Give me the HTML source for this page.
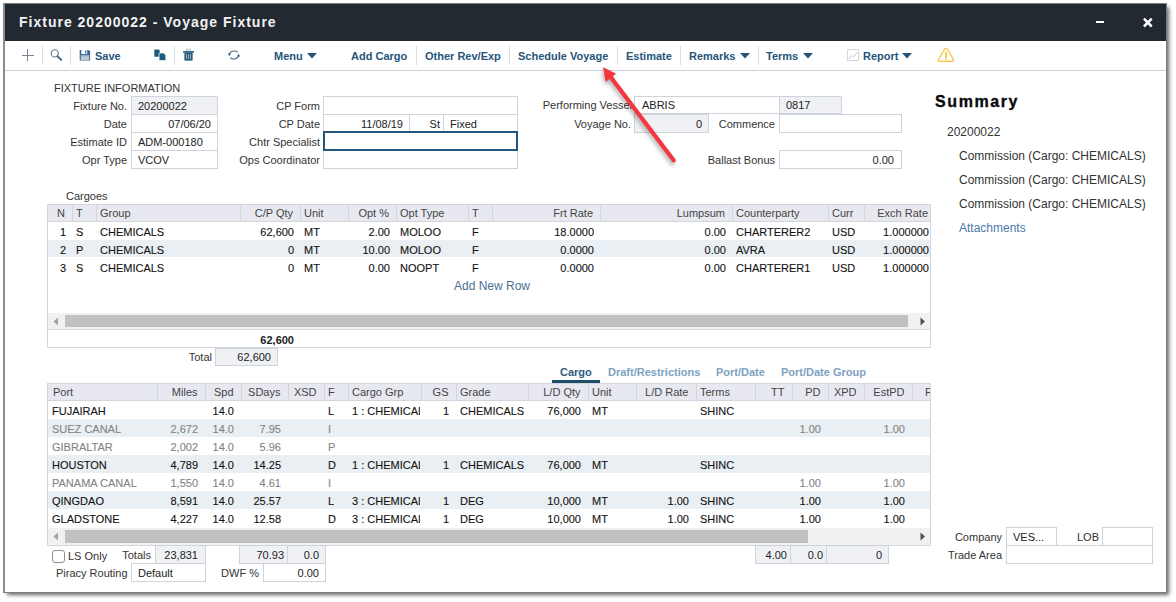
<!DOCTYPE html>
<html><head><meta charset="utf-8"><style>
*{box-sizing:border-box;margin:0;padding:0}
html,body{width:1176px;height:602px;overflow:hidden;background:#fff}
body{position:relative;font-family:"Liberation Sans",sans-serif;font-size:11px;color:#333}
.a{position:absolute;white-space:nowrap;line-height:20px}
svg.a{line-height:0}
.a[style*="#111"],.a[style*="#838383"]{-webkit-text-stroke:0.1px currentColor}
</style></head><body>
<div class="a" style="left:3px;top:3px;width:1164px;height:590px;background:#fff;border:1px solid #7d7d7d;border-left:2px solid #8c8c8c;box-shadow:3px 3px 4px -1px rgba(0,0,0,.6)"></div>
<div class="a" style="left:5px;top:4px;width:1161px;height:37px;background:#222930"></div>
<div class="a" style="left:19px;top:12px;font-size:14px;font-weight:bold;letter-spacing:1px;color:#f2f2f2">Fixture 20200022 - Voyage Fixture</div>
<div class="a" style="left:1096px;top:21px;width:8px;height:2px;background:#fff"></div>
<svg class="a" style="left:1141px;top:16px" width="13" height="13" viewBox="0 0 13 13"><path d="M2.9 2.7L10.7 10.5M10.7 2.7L2.9 10.5" stroke="#fff" stroke-width="2.5"/></svg>
<div class="a" style="left:5px;top:70px;width:1161px;height:1px;background:#c9d3dc"></div>
<div class="a" style="left:42px;top:46px;width:1px;height:19px;background:#d6dce3"></div>
<div class="a" style="left:70px;top:46px;width:1px;height:19px;background:#d6dce3"></div>
<div class="a" style="left:174px;top:46px;width:1px;height:19px;background:#d6dce3"></div>
<div class="a" style="left:416px;top:46px;width:1px;height:19px;background:#d6dce3"></div>
<div class="a" style="left:509px;top:46px;width:1px;height:19px;background:#d6dce3"></div>
<div class="a" style="left:617px;top:46px;width:1px;height:19px;background:#d6dce3"></div>
<div class="a" style="left:680px;top:46px;width:1px;height:19px;background:#d6dce3"></div>
<div class="a" style="left:758px;top:46px;width:1px;height:19px;background:#d6dce3"></div>
<div class="a" style="left:22px;top:55px;width:12px;height:1px;background:#7b8794"></div>
<div class="a" style="left:27px;top:49px;width:1px;height:12px;background:#7b8794"></div>
<svg class="a" style="left:48px;top:47px" width="16" height="16" viewBox="0 0 16 16"><circle cx="6.8" cy="6.4" r="3.6" fill="none" stroke="#5f768b" stroke-width="1.1"/><path d="M9.4 9.1L13.2 12.9" stroke="#3d6383" stroke-width="1.9" stroke-linecap="round"/></svg>
<svg class="a" style="left:79px;top:49px" width="12" height="12" viewBox="0 0 12 12"><path d="M0.7 0.9H9.6L11.1 2.5V11.6H0.7Z" fill="#2c6594"/><rect x="2.3" y="0.9" width="5.9" height="4.2" fill="#fff"/><rect x="6" y="1.5" width="1.2" height="3" fill="#2c6594"/><rect x="1.8" y="6.1" width="8.4" height="5" fill="#c3c7d2"/><rect x="1.8" y="6.1" width="8.4" height="1.2" fill="#9aa6b6"/></svg>
<div class="a" style="left:95px;top:46px;font-size:11px;font-weight:bold;color:#27557a">Save</div>
<svg class="a" style="left:154px;top:49px" width="13" height="12" viewBox="0 0 13 12"><path d="M0.3 0.4H4.6L5.8 1.6V7.8H0.3Z" fill="#1f5a7c"/><path d="M5.1 4H9.6L11.8 6.2V11.6H5.1Z" fill="#1f5a7c" stroke="#fff" stroke-width="0.7"/></svg>
<svg class="a" style="left:183px;top:48px" width="12" height="13" viewBox="0 0 12 13"><rect x="3.6" y="1.2" width="3.8" height="2" fill="none" stroke="#b3c0ca" stroke-width="0.9"/><rect x="0" y="3.1" width="11" height="1.5" fill="#2a5d7e"/><rect x="1.4" y="4.4" width="8.2" height="8.2" fill="#245a7c"/><path d="M3.5 6V11M5.5 6V11M7.5 6V11" stroke="#a7b6c1" stroke-width="0.9"/></svg>
<svg class="a" style="left:227px;top:49px" width="14" height="12" viewBox="0 0 14 12"><path d="M2.4 5.6A4.8 3.8 0 0 1 10.6 3.2" fill="none" stroke="#4f6b84" stroke-width="1.1"/><path d="M11.6 6.4A4.8 3.8 0 0 1 3.4 8.8" fill="none" stroke="#4f6b84" stroke-width="1.1"/><path d="M0.8 4.6L4 4.6L2.4 7.2Z" fill="#3f6283"/><path d="M10 7.4L13.2 7.4L11.6 4.8Z" fill="#3f6283"/></svg>
<div class="a" style="left:274px;top:46px;font-size:11px;font-weight:bold;color:#27557a">Menu</div>
<svg class="a" style="left:307px;top:53px" width="10" height="6" viewBox="0 0 10 6"><path d="M0 0H10L5 5.5Z" fill="#27557a"/></svg>
<div class="a" style="left:351px;top:46px;font-size:11px;font-weight:bold;color:#27557a">Add Cargo</div>
<div class="a" style="left:425px;top:46px;font-size:11px;font-weight:bold;color:#27557a">Other Rev/Exp</div>
<div class="a" style="left:518px;top:46px;font-size:11px;font-weight:bold;color:#27557a">Schedule Voyage</div>
<div class="a" style="left:626px;top:46px;font-size:11px;font-weight:bold;color:#27557a">Estimate</div>
<div class="a" style="left:689px;top:46px;font-size:11px;font-weight:bold;color:#27557a">Remarks</div>
<svg class="a" style="left:740px;top:53px" width="10" height="6" viewBox="0 0 10 6"><path d="M0 0H10L5 5.5Z" fill="#27557a"/></svg>
<div class="a" style="left:766px;top:46px;font-size:11px;font-weight:bold;color:#27557a">Terms</div>
<svg class="a" style="left:803px;top:53px" width="10" height="6" viewBox="0 0 10 6"><path d="M0 0H10L5 5.5Z" fill="#27557a"/></svg>
<svg class="a" style="left:847px;top:49px" width="12" height="12" viewBox="0 0 12 12"><rect x="0.5" y="0.5" width="11" height="11" fill="none" stroke="#d3d8de"/><path d="M1.5 10L4.5 6.5L6.5 8L10.5 3" fill="none" stroke="#c5ccd4" stroke-width="1"/></svg>
<div class="a" style="left:863px;top:46px;font-size:11px;font-weight:bold;color:#27557a">Report</div>
<svg class="a" style="left:902px;top:53px" width="10" height="6" viewBox="0 0 10 6"><path d="M0 0H10L5 5.5Z" fill="#27557a"/></svg>
<svg class="a" style="left:936px;top:46px" width="20" height="18" viewBox="0 0 20 18"><path d="M8.4 3.3Q10 1.3 11.6 3.3L17.3 13.2Q18.3 15.4 15.9 15.4H4.1Q1.7 15.4 2.7 13.2Z" fill="none" stroke="#f8c040" stroke-width="1.3" stroke-linejoin="round"/><rect x="9.2" y="5.6" width="1.7" height="6.4" rx="0.5" fill="#f7c22e"/><rect x="9.2" y="12.6" width="1.7" height="1.5" fill="#f7c22e"/></svg>
<div class="a" style="left:54px;top:78px;font-size:11px;color:#333">FIXTURE INFORMATION</div>
<div class="a" style="left:131px;top:96px;width:87px;height:19px;background:#eff1f4;border:1px solid #cdd4dc"></div>
<div class="a" style="right:1049px;top:96px;font-size:11px;text-align:right;color:#333">Fixture No.</div>
<div class="a" style="left:138px;top:96px;font-size:11px;color:#222">20200022</div>
<div class="a" style="left:131px;top:114px;width:87px;height:19px;background:#fff;border:1px solid #cdd4dc"></div>
<div class="a" style="right:1049px;top:114px;font-size:11px;text-align:right;color:#333">Date</div>
<div class="a" style="right:965px;top:114px;font-size:11px;text-align:right;color:#222">07/06/20</div>
<div class="a" style="left:131px;top:132px;width:87px;height:19px;background:#fff;border:1px solid #cdd4dc"></div>
<div class="a" style="right:1049px;top:132px;font-size:11px;text-align:right;color:#333">Estimate ID</div>
<div class="a" style="left:138px;top:132px;font-size:11px;color:#222">ADM-000180</div>
<div class="a" style="left:131px;top:150px;width:87px;height:19px;background:#fff;border:1px solid #cdd4dc"></div>
<div class="a" style="right:1049px;top:150px;font-size:11px;text-align:right;color:#333">Opr Type</div>
<div class="a" style="left:138px;top:150px;font-size:11px;color:#222">VCOV</div>
<div class="a" style="right:856px;top:96px;font-size:11px;text-align:right;color:#333">CP Form</div>
<div class="a" style="right:856px;top:114px;font-size:11px;text-align:right;color:#333">CP Date</div>
<div class="a" style="right:856px;top:132px;font-size:11px;text-align:right;color:#333">Chtr Specialist</div>
<div class="a" style="right:856px;top:150px;font-size:11px;text-align:right;color:#333">Ops Coordinator</div>
<div class="a" style="left:323px;top:96px;width:195px;height:19px;background:#fff;border:1px solid #cdd4dc"></div>
<div class="a" style="left:323px;top:114px;width:87px;height:18px;background:#fff;border:1px solid #cdd4dc"></div>
<div class="a" style="left:409px;top:114px;width:35px;height:18px;background:#fff;border:1px solid #cdd4dc"></div>
<div class="a" style="left:443px;top:114px;width:75px;height:18px;background:#fff;border:1px solid #cdd4dc"></div>
<div class="a" style="left:323px;top:150px;width:195px;height:19px;background:#fff;border:1px solid #cdd4dc"></div>
<div class="a" style="left:323px;top:131px;width:195px;height:20px;background:#fff;border:2px solid #20577a"></div>
<div class="a" style="right:773px;top:114px;font-size:11px;text-align:right;color:#222">11/08/19</div>
<div class="a" style="right:736px;top:114px;font-size:11px;text-align:right;color:#222">St</div>
<div class="a" style="left:450px;top:114px;font-size:11px;color:#222">Fixed</div>
<div class="a" style="right:544px;top:95px;font-size:11px;text-align:right;color:#333">Performing Vessel</div>
<div class="a" style="left:634px;top:96px;width:146px;height:18px;background:#fff;border:1px solid #cdd4dc"></div>
<div class="a" style="left:779px;top:96px;width:63px;height:18px;background:#eff1f4;border:1px solid #cdd4dc"></div>
<div class="a" style="left:642px;top:95px;font-size:11px;color:#222">ABRIS</div>
<div class="a" style="left:786px;top:95px;font-size:11px;color:#222">0817</div>
<div class="a" style="right:545px;top:114px;font-size:11px;text-align:right;color:#333">Voyage No.</div>
<div class="a" style="left:634px;top:114px;width:75px;height:19px;background:#eff1f4;border:1px solid #cdd4dc"></div>
<div class="a" style="right:474px;top:114px;font-size:11px;text-align:right;color:#222">0</div>
<div class="a" style="right:401px;top:114px;font-size:11px;text-align:right;color:#333">Commence</div>
<div class="a" style="left:779px;top:114px;width:123px;height:19px;background:#fff;border:1px solid #cdd4dc"></div>
<div class="a" style="right:401px;top:150px;font-size:11px;text-align:right;color:#333">Ballast Bonus</div>
<div class="a" style="left:779px;top:150px;width:123px;height:19px;background:#fff;border:1px solid #cdd4dc"></div>
<div class="a" style="right:282px;top:150px;font-size:11px;text-align:right;color:#222">0.00</div>
<div class="a" style="left:935px;top:92px;font-size:16px;font-weight:bold;color:#0a0a0a;letter-spacing:1.6px;-webkit-text-stroke:0.35px #0a0a0a">Summary</div>
<div class="a" style="left:947px;top:122px;font-size:12px;color:#333">20200022</div>
<div class="a" style="left:959px;top:146px;font-size:12px;color:#333">Commission (Cargo: CHEMICALS)</div>
<div class="a" style="left:959px;top:170px;font-size:12px;color:#333">Commission (Cargo: CHEMICALS)</div>
<div class="a" style="left:959px;top:194px;font-size:12px;color:#333">Commission (Cargo: CHEMICALS)</div>
<div class="a" style="left:959px;top:218px;font-size:12px;color:#4b7aa8">Attachments</div>
<div class="a" style="left:66px;top:186px;font-size:11px;color:#333">Cargoes</div>
<div class="a" style="left:47px;top:204px;width:884px;height:144px;border:1px solid #d2d7df;background:#fff"></div>
<div class="a" style="left:48px;top:205px;width:882px;height:17px;background:#e8e9f0;border-bottom:1px solid #d2d7df"></div>
<div class="a" style="left:72px;top:205px;width:1px;height:17px;background:#d2d7df"></div>
<div class="a" style="left:96px;top:205px;width:1px;height:17px;background:#d2d7df"></div>
<div class="a" style="left:240px;top:205px;width:1px;height:17px;background:#d2d7df"></div>
<div class="a" style="left:300px;top:205px;width:1px;height:17px;background:#d2d7df"></div>
<div class="a" style="left:348px;top:205px;width:1px;height:17px;background:#d2d7df"></div>
<div class="a" style="left:396px;top:205px;width:1px;height:17px;background:#d2d7df"></div>
<div class="a" style="left:468px;top:205px;width:1px;height:17px;background:#d2d7df"></div>
<div class="a" style="left:492px;top:205px;width:1px;height:17px;background:#d2d7df"></div>
<div class="a" style="left:600px;top:205px;width:1px;height:17px;background:#d2d7df"></div>
<div class="a" style="left:732px;top:205px;width:1px;height:17px;background:#d2d7df"></div>
<div class="a" style="left:828px;top:205px;width:1px;height:17px;background:#d2d7df"></div>
<div class="a" style="left:864px;top:205px;width:1px;height:17px;background:#d2d7df"></div>
<div class="a" style="right:1111px;top:203px;font-size:11px;text-align:right;color:#444">N</div>
<div class="a" style="left:76px;top:203px;font-size:11px;color:#444">T</div>
<div class="a" style="left:100px;top:203px;font-size:11px;color:#444">Group</div>
<div class="a" style="right:883px;top:203px;font-size:11px;text-align:right;color:#444">C/P Qty</div>
<div class="a" style="left:304px;top:203px;font-size:11px;color:#444">Unit</div>
<div class="a" style="right:787px;top:203px;font-size:11px;text-align:right;color:#444">Opt %</div>
<div class="a" style="left:400px;top:203px;font-size:11px;color:#444">Opt Type</div>
<div class="a" style="left:472px;top:203px;font-size:11px;color:#444">T</div>
<div class="a" style="right:583px;top:203px;font-size:11px;text-align:right;color:#444">Frt Rate</div>
<div class="a" style="right:451px;top:203px;font-size:11px;text-align:right;color:#444">Lumpsum</div>
<div class="a" style="left:736px;top:203px;font-size:11px;color:#444">Counterparty</div>
<div class="a" style="left:832px;top:203px;font-size:11px;color:#444">Curr</div>
<div class="a" style="right:248px;top:203px;font-size:11px;text-align:right;color:#444">Exch Rate</div>
<div class="a" style="right:1110px;top:222px;font-size:11px;text-align:right;color:#111">1</div>
<div class="a" style="left:76px;top:222px;font-size:11px;color:#111">S</div>
<div class="a" style="left:100px;top:222px;font-size:11px;color:#111">CHEMICALS</div>
<div class="a" style="right:882px;top:222px;font-size:11px;text-align:right;color:#111">62,600</div>
<div class="a" style="left:304px;top:222px;font-size:11px;color:#111">MT</div>
<div class="a" style="right:786px;top:222px;font-size:11px;text-align:right;color:#111">2.00</div>
<div class="a" style="left:400px;top:222px;font-size:11px;color:#111">MOLOO</div>
<div class="a" style="left:472px;top:222px;font-size:11px;color:#111">F</div>
<div class="a" style="right:582px;top:222px;font-size:11px;text-align:right;color:#111">18.0000</div>
<div class="a" style="right:450px;top:222px;font-size:11px;text-align:right;color:#111">0.00</div>
<div class="a" style="left:736px;top:222px;font-size:11px;color:#111">CHARTERER2</div>
<div class="a" style="left:832px;top:222px;font-size:11px;color:#111">USD</div>
<div class="a" style="right:247px;top:222px;font-size:11px;text-align:right;color:#111">1.000000</div>
<div class="a" style="left:48px;top:240px;width:882px;height:17px;background:#e9eff2"></div>
<div class="a" style="right:1110px;top:240px;font-size:11px;text-align:right;color:#111">2</div>
<div class="a" style="left:76px;top:240px;font-size:11px;color:#111">P</div>
<div class="a" style="left:100px;top:240px;font-size:11px;color:#111">CHEMICALS</div>
<div class="a" style="right:882px;top:240px;font-size:11px;text-align:right;color:#111">0</div>
<div class="a" style="left:304px;top:240px;font-size:11px;color:#111">MT</div>
<div class="a" style="right:786px;top:240px;font-size:11px;text-align:right;color:#111">10.00</div>
<div class="a" style="left:400px;top:240px;font-size:11px;color:#111">MOLOO</div>
<div class="a" style="left:472px;top:240px;font-size:11px;color:#111">F</div>
<div class="a" style="right:582px;top:240px;font-size:11px;text-align:right;color:#111">0.0000</div>
<div class="a" style="right:450px;top:240px;font-size:11px;text-align:right;color:#111">0.00</div>
<div class="a" style="left:736px;top:240px;font-size:11px;color:#111">AVRA</div>
<div class="a" style="left:832px;top:240px;font-size:11px;color:#111">USD</div>
<div class="a" style="right:247px;top:240px;font-size:11px;text-align:right;color:#111">1.000000</div>
<div class="a" style="right:1110px;top:258px;font-size:11px;text-align:right;color:#111">3</div>
<div class="a" style="left:76px;top:258px;font-size:11px;color:#111">S</div>
<div class="a" style="left:100px;top:258px;font-size:11px;color:#111">CHEMICALS</div>
<div class="a" style="right:882px;top:258px;font-size:11px;text-align:right;color:#111">0</div>
<div class="a" style="left:304px;top:258px;font-size:11px;color:#111">MT</div>
<div class="a" style="right:786px;top:258px;font-size:11px;text-align:right;color:#111">0.00</div>
<div class="a" style="left:400px;top:258px;font-size:11px;color:#111">NOOPT</div>
<div class="a" style="left:472px;top:258px;font-size:11px;color:#111">F</div>
<div class="a" style="right:582px;top:258px;font-size:11px;text-align:right;color:#111">0.0000</div>
<div class="a" style="right:450px;top:258px;font-size:11px;text-align:right;color:#111">0.00</div>
<div class="a" style="left:736px;top:258px;font-size:11px;color:#111">CHARTERER1</div>
<div class="a" style="left:832px;top:258px;font-size:11px;color:#111">USD</div>
<div class="a" style="right:247px;top:258px;font-size:11px;text-align:right;color:#111">1.000000</div>
<div class="a" style="left:454px;top:276px;font-size:12px;color:#4b7092">Add New Row</div>
<div class="a" style="left:48px;top:313px;width:882px;height:16px;background:#f1f1f1"></div>
<div class="a" style="left:65px;top:315px;width:843px;height:12px;background:#c1c1c1"></div>
<svg class="a" style="left:53px;top:317px" width="6" height="9" viewBox="0 0 6 9"><path d="M5 0.5V8.5L0.5 4.5Z" fill="#a3a3a3"/></svg>
<svg class="a" style="left:920px;top:317px" width="6" height="9" viewBox="0 0 6 9"><path d="M0.5 0.5V8.5L5 4.5Z" fill="#505050"/></svg>
<div class="a" style="left:48px;top:329px;width:882px;height:1px;background:#d2d7df"></div>
<div class="a" style="right:882px;top:330px;font-size:11px;text-align:right;font-weight:bold;color:#222">62,600</div>
<div class="a" style="right:964px;top:347px;font-size:11px;text-align:right;color:#333">Total</div>
<div class="a" style="left:215px;top:348px;width:63px;height:18px;background:#eff1f4;border:1px solid #cdd4dc"></div>
<div class="a" style="right:905px;top:347px;font-size:11px;text-align:right;color:#222">62,600</div>
<div class="a" style="left:560px;top:362px;font-size:11px;font-weight:bold;color:#2f5d80">Cargo</div>
<div class="a" style="left:608px;top:362px;font-size:11px;font-weight:bold;color:#7ea2c0">Draft/Restrictions</div>
<div class="a" style="left:716px;top:362px;font-size:11px;font-weight:bold;color:#7ea2c0">Port/Date</div>
<div class="a" style="left:781px;top:362px;font-size:11px;font-weight:bold;color:#7ea2c0">Port/Date Group</div>
<div class="a" style="left:552px;top:380px;width:48px;height:3px;background:#1f4e6a"></div>
<div class="a" style="left:47px;top:383px;width:884px;height:163px;border:1px solid #d2d7df;background:#fff"></div>
<div class="a" style="left:48px;top:384px;width:882px;height:17px;background:#e8e9f0;border-bottom:1px solid #d2d7df"></div>
<div class="a" style="left:157px;top:384px;width:1px;height:17px;background:#d2d7df"></div>
<div class="a" style="left:205px;top:384px;width:1px;height:17px;background:#d2d7df"></div>
<div class="a" style="left:241px;top:384px;width:1px;height:17px;background:#d2d7df"></div>
<div class="a" style="left:288px;top:384px;width:1px;height:17px;background:#d2d7df"></div>
<div class="a" style="left:324px;top:384px;width:1px;height:17px;background:#d2d7df"></div>
<div class="a" style="left:348px;top:384px;width:1px;height:17px;background:#d2d7df"></div>
<div class="a" style="left:421px;top:384px;width:1px;height:17px;background:#d2d7df"></div>
<div class="a" style="left:456px;top:384px;width:1px;height:17px;background:#d2d7df"></div>
<div class="a" style="left:528px;top:384px;width:1px;height:17px;background:#d2d7df"></div>
<div class="a" style="left:588px;top:384px;width:1px;height:17px;background:#d2d7df"></div>
<div class="a" style="left:636px;top:384px;width:1px;height:17px;background:#d2d7df"></div>
<div class="a" style="left:696px;top:384px;width:1px;height:17px;background:#d2d7df"></div>
<div class="a" style="left:755px;top:384px;width:1px;height:17px;background:#d2d7df"></div>
<div class="a" style="left:792px;top:384px;width:1px;height:17px;background:#d2d7df"></div>
<div class="a" style="left:828px;top:384px;width:1px;height:17px;background:#d2d7df"></div>
<div class="a" style="left:864px;top:384px;width:1px;height:17px;background:#d2d7df"></div>
<div class="a" style="left:912px;top:384px;width:1px;height:17px;background:#d2d7df"></div>
<div class="a" style="left:53px;top:382px;font-size:11px;color:#444">Port</div>
<div class="a" style="right:978.5px;top:382px;font-size:11px;text-align:right;color:#444">Miles</div>
<div class="a" style="right:942.5px;top:382px;font-size:11px;text-align:right;color:#444">Spd</div>
<div class="a" style="right:895.5px;top:382px;font-size:11px;text-align:right;color:#444">SDays</div>
<div class="a" style="right:859.5px;top:382px;font-size:11px;text-align:right;color:#444">XSD</div>
<div class="a" style="left:328px;top:382px;font-size:11px;color:#444">F</div>
<div class="a" style="left:352px;top:382px;font-size:11px;color:#444">Cargo Grp</div>
<div class="a" style="right:727.5px;top:382px;font-size:11px;text-align:right;color:#444">GS</div>
<div class="a" style="left:460px;top:382px;font-size:11px;color:#444">Grade</div>
<div class="a" style="right:595.5px;top:382px;font-size:11px;text-align:right;color:#444">L/D Qty</div>
<div class="a" style="left:592px;top:382px;font-size:11px;color:#444">Unit</div>
<div class="a" style="right:487.5px;top:382px;font-size:11px;text-align:right;color:#444">L/D Rate</div>
<div class="a" style="left:700px;top:382px;font-size:11px;color:#444">Terms</div>
<div class="a" style="right:391.5px;top:382px;font-size:11px;text-align:right;color:#444">TT</div>
<div class="a" style="right:355.5px;top:382px;font-size:11px;text-align:right;color:#444">PD</div>
<div class="a" style="right:319.5px;top:382px;font-size:11px;text-align:right;color:#444">XPD</div>
<div class="a" style="right:271.5px;top:382px;font-size:11px;text-align:right;color:#444">EstPD</div>
<div class="a" style="left:925px;top:382px;width:5px;overflow:hidden;font-size:11px;color:#444">F</div>
<div class="a" style="left:52px;top:401px;font-size:11px;color:#111">FUJAIRAH</div>
<div class="a" style="right:942px;top:401px;font-size:11px;text-align:right;color:#111">14.0</div>
<div class="a" style="left:328px;top:401px;font-size:11px;color:#111">L</div>
<div class="a" style="left:352px;top:401px;width:68px;overflow:hidden;font-size:11px;color:#111">1 : CHEMICALS</div>
<div class="a" style="right:727px;top:401px;font-size:11px;text-align:right;color:#111">1</div>
<div class="a" style="left:460px;top:401px;font-size:11px;color:#111">CHEMICALS</div>
<div class="a" style="right:595px;top:401px;font-size:11px;text-align:right;color:#111">76,000</div>
<div class="a" style="left:592px;top:401px;font-size:11px;color:#111">MT</div>
<div class="a" style="left:700px;top:401px;font-size:11px;color:#111">SHINC</div>
<div class="a" style="left:48px;top:419px;width:882px;height:18px;background:#e9eff2"></div>
<div class="a" style="left:52px;top:419px;font-size:11px;color:#838383">SUEZ CANAL</div>
<div class="a" style="right:978px;top:419px;font-size:11px;text-align:right;color:#838383">2,672</div>
<div class="a" style="right:942px;top:419px;font-size:11px;text-align:right;color:#838383">14.0</div>
<div class="a" style="right:895px;top:419px;font-size:11px;text-align:right;color:#838383">7.95</div>
<div class="a" style="left:328px;top:419px;font-size:11px;color:#838383">I</div>
<div class="a" style="right:355px;top:419px;font-size:11px;text-align:right;color:#838383">1.00</div>
<div class="a" style="right:271px;top:419px;font-size:11px;text-align:right;color:#838383">1.00</div>
<div class="a" style="left:52px;top:437px;font-size:11px;color:#838383">GIBRALTAR</div>
<div class="a" style="right:978px;top:437px;font-size:11px;text-align:right;color:#838383">2,002</div>
<div class="a" style="right:942px;top:437px;font-size:11px;text-align:right;color:#838383">14.0</div>
<div class="a" style="right:895px;top:437px;font-size:11px;text-align:right;color:#838383">5.96</div>
<div class="a" style="left:328px;top:437px;font-size:11px;color:#838383">P</div>
<div class="a" style="left:48px;top:455px;width:882px;height:18px;background:#e9eff2"></div>
<div class="a" style="left:52px;top:455px;font-size:11px;color:#111">HOUSTON</div>
<div class="a" style="right:978px;top:455px;font-size:11px;text-align:right;color:#111">4,789</div>
<div class="a" style="right:942px;top:455px;font-size:11px;text-align:right;color:#111">14.0</div>
<div class="a" style="right:895px;top:455px;font-size:11px;text-align:right;color:#111">14.25</div>
<div class="a" style="left:328px;top:455px;font-size:11px;color:#111">D</div>
<div class="a" style="left:352px;top:455px;width:68px;overflow:hidden;font-size:11px;color:#111">1 : CHEMICALS</div>
<div class="a" style="right:727px;top:455px;font-size:11px;text-align:right;color:#111">1</div>
<div class="a" style="left:460px;top:455px;font-size:11px;color:#111">CHEMICALS</div>
<div class="a" style="right:595px;top:455px;font-size:11px;text-align:right;color:#111">76,000</div>
<div class="a" style="left:592px;top:455px;font-size:11px;color:#111">MT</div>
<div class="a" style="left:700px;top:455px;font-size:11px;color:#111">SHINC</div>
<div class="a" style="left:52px;top:473px;font-size:11px;color:#838383">PANAMA CANAL</div>
<div class="a" style="right:978px;top:473px;font-size:11px;text-align:right;color:#838383">1,550</div>
<div class="a" style="right:942px;top:473px;font-size:11px;text-align:right;color:#838383">14.0</div>
<div class="a" style="right:895px;top:473px;font-size:11px;text-align:right;color:#838383">4.61</div>
<div class="a" style="left:328px;top:473px;font-size:11px;color:#838383">I</div>
<div class="a" style="right:355px;top:473px;font-size:11px;text-align:right;color:#838383">1.00</div>
<div class="a" style="right:271px;top:473px;font-size:11px;text-align:right;color:#838383">1.00</div>
<div class="a" style="left:48px;top:491px;width:882px;height:18px;background:#e9eff2"></div>
<div class="a" style="left:52px;top:491px;font-size:11px;color:#111">QINGDAO</div>
<div class="a" style="right:978px;top:491px;font-size:11px;text-align:right;color:#111">8,591</div>
<div class="a" style="right:942px;top:491px;font-size:11px;text-align:right;color:#111">14.0</div>
<div class="a" style="right:895px;top:491px;font-size:11px;text-align:right;color:#111">25.57</div>
<div class="a" style="left:328px;top:491px;font-size:11px;color:#111">L</div>
<div class="a" style="left:352px;top:491px;width:68px;overflow:hidden;font-size:11px;color:#111">3 : CHEMICALS</div>
<div class="a" style="right:727px;top:491px;font-size:11px;text-align:right;color:#111">1</div>
<div class="a" style="left:460px;top:491px;font-size:11px;color:#111">DEG</div>
<div class="a" style="right:595px;top:491px;font-size:11px;text-align:right;color:#111">10,000</div>
<div class="a" style="left:592px;top:491px;font-size:11px;color:#111">MT</div>
<div class="a" style="right:487px;top:491px;font-size:11px;text-align:right;color:#111">1.00</div>
<div class="a" style="left:700px;top:491px;font-size:11px;color:#111">SHINC</div>
<div class="a" style="right:355px;top:491px;font-size:11px;text-align:right;color:#111">1.00</div>
<div class="a" style="right:271px;top:491px;font-size:11px;text-align:right;color:#111">1.00</div>
<div class="a" style="left:52px;top:509px;font-size:11px;color:#111">GLADSTONE</div>
<div class="a" style="right:978px;top:509px;font-size:11px;text-align:right;color:#111">4,227</div>
<div class="a" style="right:942px;top:509px;font-size:11px;text-align:right;color:#111">14.0</div>
<div class="a" style="right:895px;top:509px;font-size:11px;text-align:right;color:#111">12.58</div>
<div class="a" style="left:328px;top:509px;font-size:11px;color:#111">D</div>
<div class="a" style="left:352px;top:509px;width:68px;overflow:hidden;font-size:11px;color:#111">3 : CHEMICALS</div>
<div class="a" style="right:727px;top:509px;font-size:11px;text-align:right;color:#111">1</div>
<div class="a" style="left:460px;top:509px;font-size:11px;color:#111">DEG</div>
<div class="a" style="right:595px;top:509px;font-size:11px;text-align:right;color:#111">10,000</div>
<div class="a" style="left:592px;top:509px;font-size:11px;color:#111">MT</div>
<div class="a" style="right:487px;top:509px;font-size:11px;text-align:right;color:#111">1.00</div>
<div class="a" style="left:700px;top:509px;font-size:11px;color:#111">SHINC</div>
<div class="a" style="right:355px;top:509px;font-size:11px;text-align:right;color:#111">1.00</div>
<div class="a" style="right:271px;top:509px;font-size:11px;text-align:right;color:#111">1.00</div>
<div class="a" style="left:48px;top:528px;width:882px;height:17px;background:#f1f1f1"></div>
<div class="a" style="left:65px;top:530px;width:743px;height:13px;background:#c1c1c1"></div>
<svg class="a" style="left:53px;top:532px" width="6" height="9" viewBox="0 0 6 9"><path d="M5 0.5V8.5L0.5 4.5Z" fill="#a3a3a3"/></svg>
<svg class="a" style="left:920px;top:532px" width="6" height="9" viewBox="0 0 6 9"><path d="M0.5 0.5V8.5L5 4.5Z" fill="#505050"/></svg>
<div class="a" style="left:52px;top:550px;width:13px;height:13px;border:1px solid #8e8e8e;border-radius:3px;background:#fff"></div>
<div class="a" style="left:68px;top:546px;font-size:11px;color:#333">LS Only</div>
<div class="a" style="right:1025px;top:545px;font-size:11px;text-align:right;color:#333">Totals</div>
<div class="a" style="left:155px;top:545px;width:51px;height:19px;background:#eff1f4;border:1px solid #cdd4dc"></div>
<div class="a" style="right:978px;top:545px;font-size:11px;text-align:right;color:#222">23,831</div>
<div class="a" style="left:239px;top:545px;width:49px;height:19px;background:#eff1f4;border:1px solid #cdd4dc"></div>
<div class="a" style="left:287px;top:545px;width:39px;height:19px;background:#eff1f4;border:1px solid #cdd4dc"></div>
<div class="a" style="right:892px;top:545px;font-size:11px;text-align:right;color:#222">70.93</div>
<div class="a" style="right:857px;top:545px;font-size:11px;text-align:right;color:#222">0.0</div>
<div class="a" style="left:56px;top:563px;font-size:11px;color:#333">Piracy Routing</div>
<div class="a" style="left:131px;top:563px;width:75px;height:19px;background:#fff;border:1px solid #cdd4dc"></div>
<div class="a" style="left:138px;top:563px;font-size:11px;color:#222">Default</div>
<div class="a" style="right:917px;top:563px;font-size:11px;text-align:right;color:#333">DWF %</div>
<div class="a" style="left:263px;top:563px;width:63px;height:19px;background:#fff;border:1px solid #cdd4dc"></div>
<div class="a" style="right:857px;top:563px;font-size:11px;text-align:right;color:#222">0.00</div>
<div class="a" style="left:755px;top:545px;width:36px;height:19px;background:#eff1f4;border:1px solid #cdd4dc"></div>
<div class="a" style="left:790px;top:545px;width:37px;height:19px;background:#eff1f4;border:1px solid #cdd4dc"></div>
<div class="a" style="left:826px;top:545px;width:63px;height:19px;background:#eff1f4;border:1px solid #cdd4dc"></div>
<div class="a" style="right:389px;top:545px;font-size:11px;text-align:right;color:#222">4.00</div>
<div class="a" style="right:353px;top:545px;font-size:11px;text-align:right;color:#222">0.0</div>
<div class="a" style="right:294px;top:545px;font-size:11px;text-align:right;color:#222">0</div>
<div class="a" style="right:174px;top:527px;font-size:11px;text-align:right;color:#333">Company</div>
<div class="a" style="left:1006px;top:527px;width:51px;height:19px;background:#fff;border:1px solid #cdd4dc"></div>
<div class="a" style="left:1013px;top:527px;font-size:11px;color:#222">VES...</div>
<div class="a" style="right:77px;top:527px;font-size:11px;text-align:right;color:#333">LOB</div>
<div class="a" style="left:1102px;top:527px;width:51px;height:19px;background:#fff;border:1px solid #cdd4dc"></div>
<div class="a" style="right:174px;top:545px;font-size:11px;text-align:right;color:#333">Trade Area</div>
<div class="a" style="left:1006px;top:545px;width:147px;height:19px;background:#fff;border:1px solid #cdd4dc"></div>
<svg class="a" style="left:0;top:0;filter:drop-shadow(-1px 3px 2px rgba(0,0,0,.32))" width="1176" height="602"><path d="M673.6 160.3L611 77.5" stroke="#f5363f" stroke-width="4.2" stroke-linecap="round"/><path d="M603.5 67.8L615.5 73.8L606 81.2Z" fill="#f5363f" stroke="#f5363f" stroke-width="0.8" stroke-linejoin="round"/></svg>
</body></html>
